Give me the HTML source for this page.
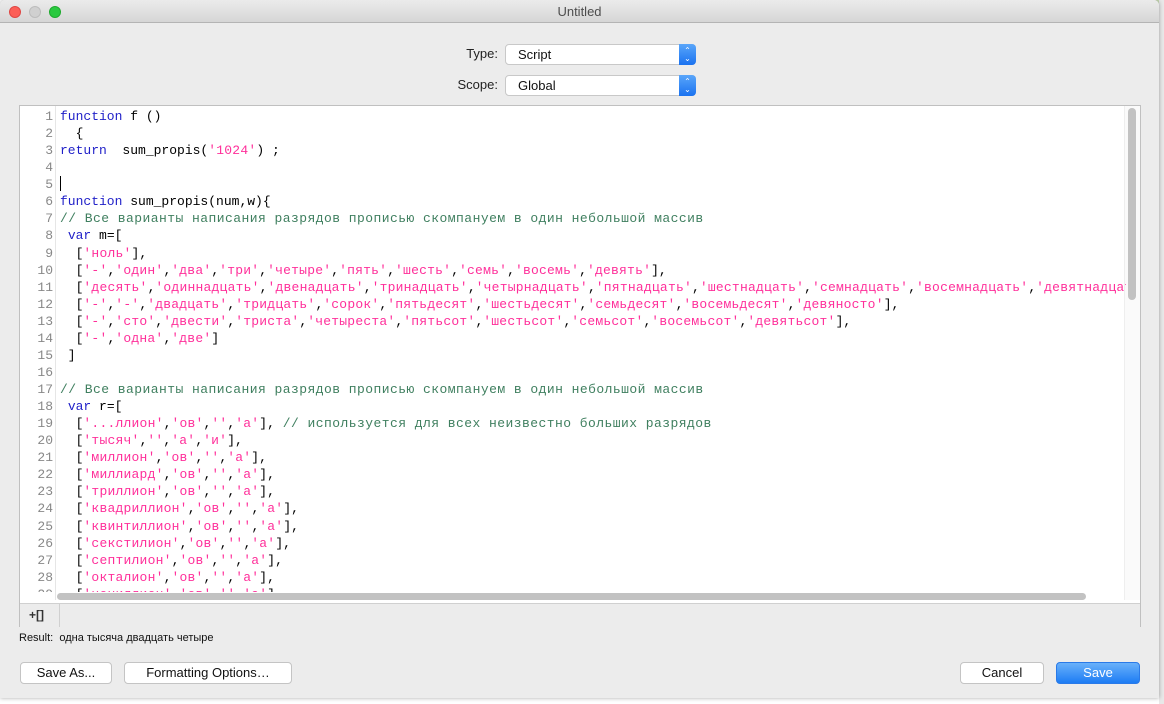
<!DOCTYPE html>
<html><head><meta charset="utf-8"><style>
*{margin:0;padding:0;box-sizing:border-box}
body{width:1164px;height:704px;overflow:hidden;background:#fff;font-family:"Liberation Sans","DejaVu Sans",sans-serif;position:relative}
.bgr{position:absolute;left:1159px;top:0;width:5px;height:704px;background:#e8e8e8}
.bgt{position:absolute;left:900px;top:0;width:264px;height:5px;background:#c9dbb4}
.win{position:absolute;left:0;top:0;width:1159px;height:698px;background:#ececec;border-radius:5px 5px 0 0;box-shadow:0 0 4px rgba(0,0,0,.35);overflow:hidden}
.title{height:23px;background:linear-gradient(#ebebeb,#d6d6d6);border-bottom:1px solid #b4b4b4;text-align:center;font-size:13px;line-height:23px;color:#4d4d4d}
.dot{position:absolute;top:6px;width:12px;height:12px;border-radius:50%}
.lbl{position:absolute;font-size:13px;color:#222;text-align:right;width:60px}
.sel{position:absolute;left:505px;width:191px;height:21px;background:#fff;border:1px solid #c8c8c8;border-radius:4px;font-size:13px;line-height:19px;padding-left:12px;color:#111}
.sel i{position:absolute;right:-1px;top:-1px;width:17px;height:21px;background:linear-gradient(#5aa6fa,#1a72f0);border-radius:0 4px 4px 0;color:#fff;font-style:normal;font-size:8px;line-height:8px;text-align:center;padding-top:3px}
.ed{position:absolute;left:19px;top:105px;width:1122px;height:522px;background:#fff;border:1px solid #c0c0c0}
.gut{position:absolute;left:0;top:0;width:36px;height:494px;border-right:1px solid #e6e6e6}
.code{position:absolute;left:0;top:2px;width:1106px;height:484px;overflow:hidden;font-family:"Liberation Mono",monospace;font-size:13px;line-height:17.07px;white-space:pre}
.ln{position:absolute;left:0;width:33px;text-align:right;color:#888}
.tx{position:absolute;left:40px;color:#000}
.k{color:#1f1fc8}.s{color:#ff2f9a;letter-spacing:0.22px}.c{color:#3f7f5f;letter-spacing:0.45px}
.vs{position:absolute;left:1108px;top:2px;width:8px;height:192px;background:#c2c2c2;border-radius:4px}
.vtrack{position:absolute;left:1104px;top:0;width:16px;height:494px;border-left:1px solid #eee;background:#fafafa}
.hs{position:absolute;left:37px;top:487px;width:1029px;height:7px;background:#c2c2c2;border-radius:4px}
.bar{position:absolute;left:0;top:497px;width:1120px;height:24px;background:#ececec;border-top:1px solid #d0d0d0}
.btn{position:absolute;height:22px;background:#fff;border:1px solid #c4c4c4;border-radius:4px;font-size:13px;line-height:20px;text-align:center;color:#111}
</style></head><body>
<div class="bgt"></div><div class="bgr"></div>
<div class="win">
<div class="title">Untitled</div>
<div class="dot" style="left:9px;background:#fc5f57;border:1px solid #df4744"></div>
<div class="dot" style="left:29px;background:#d0d0d0;border:1px solid #bcbcbc"></div>
<div class="dot" style="left:49px;background:#2ac940;border:1px solid #1eaa2e"></div>
<div class="lbl" style="left:438px;top:46px">Type:</div>
<div class="sel" style="top:44px">Script<i>⌃<br>⌄</i></div>
<div class="lbl" style="left:438px;top:77px">Scope:</div>
<div class="sel" style="top:75px">Global<i>⌃<br>⌄</i></div>
<div class="ed">
<div class="gut"></div>
<div class="vtrack"></div>
<div class="code"><div class="ln" style="top:0">1
2
3
4
5
6
7
8
9
10
11
12
13
14
15
16
17
18
19
20
21
22
23
24
25
26
27
28
29</div><div class="tx" style="top:0"><span class="k">function</span> f ()
  {
<span class="k">return</span>  sum_propis(<span class="s">'1024'</span>) ;


<span class="k">function</span> sum_propis(num,w){
<span class="c">// Все варианты написания разрядов прописью скомпануем в один небольшой массив</span>
 <span class="k">var</span> m=[
  [<span class="s">'ноль'</span>],
  [<span class="s">'-'</span>,<span class="s">'один'</span>,<span class="s">'два'</span>,<span class="s">'три'</span>,<span class="s">'четыре'</span>,<span class="s">'пять'</span>,<span class="s">'шесть'</span>,<span class="s">'семь'</span>,<span class="s">'восемь'</span>,<span class="s">'девять'</span>],
  [<span class="s">'десять'</span>,<span class="s">'одиннадцать'</span>,<span class="s">'двенадцать'</span>,<span class="s">'тринадцать'</span>,<span class="s">'четырнадцать'</span>,<span class="s">'пятнадцать'</span>,<span class="s">'шестнадцать'</span>,<span class="s">'семнадцать'</span>,<span class="s">'восемнадцать'</span>,<span class="s">'девятнадцать'</span>],
  [<span class="s">'-'</span>,<span class="s">'-'</span>,<span class="s">'двадцать'</span>,<span class="s">'тридцать'</span>,<span class="s">'сорок'</span>,<span class="s">'пятьдесят'</span>,<span class="s">'шестьдесят'</span>,<span class="s">'семьдесят'</span>,<span class="s">'восемьдесят'</span>,<span class="s">'девяносто'</span>],
  [<span class="s">'-'</span>,<span class="s">'сто'</span>,<span class="s">'двести'</span>,<span class="s">'триста'</span>,<span class="s">'четыреста'</span>,<span class="s">'пятьсот'</span>,<span class="s">'шестьсот'</span>,<span class="s">'семьсот'</span>,<span class="s">'восемьсот'</span>,<span class="s">'девятьсот'</span>],
  [<span class="s">'-'</span>,<span class="s">'одна'</span>,<span class="s">'две'</span>]
 ]

<span class="c">// Все варианты написания разрядов прописью скомпануем в один небольшой массив</span>
 <span class="k">var</span> r=[
  [<span class="s">'...ллион'</span>,<span class="s">'ов'</span>,<span class="s">''</span>,<span class="s">'а'</span>], <span class="c">// используется для всех неизвестно больших разрядов</span>
  [<span class="s">'тысяч'</span>,<span class="s">''</span>,<span class="s">'а'</span>,<span class="s">'и'</span>],
  [<span class="s">'миллион'</span>,<span class="s">'ов'</span>,<span class="s">''</span>,<span class="s">'а'</span>],
  [<span class="s">'миллиард'</span>,<span class="s">'ов'</span>,<span class="s">''</span>,<span class="s">'а'</span>],
  [<span class="s">'триллион'</span>,<span class="s">'ов'</span>,<span class="s">''</span>,<span class="s">'а'</span>],
  [<span class="s">'квадриллион'</span>,<span class="s">'ов'</span>,<span class="s">''</span>,<span class="s">'а'</span>],
  [<span class="s">'квинтиллион'</span>,<span class="s">'ов'</span>,<span class="s">''</span>,<span class="s">'а'</span>],
  [<span class="s">'секстилион'</span>,<span class="s">'ов'</span>,<span class="s">''</span>,<span class="s">'а'</span>],
  [<span class="s">'септилион'</span>,<span class="s">'ов'</span>,<span class="s">''</span>,<span class="s">'а'</span>],
  [<span class="s">'окталион'</span>,<span class="s">'ов'</span>,<span class="s">''</span>,<span class="s">'а'</span>],
  [<span class="s">'нониллион'</span>,<span class="s">'ов'</span>,<span class="s">''</span>,<span class="s">'а'</span>],</div></div>
<div style="position:absolute;left:40px;top:70px;width:1px;height:15px;background:#000"></div>
<div class="vs"></div>
<div class="hs"></div>
<div class="bar"><div style="position:absolute;left:0;top:0;width:40px;height:23px;border-right:1px solid #d0d0d0;font-size:12px;font-weight:bold;line-height:22px;padding-left:9px;color:#333">+[]</div></div>
</div>
<div style="position:absolute;left:19px;top:632px;font-size:11px;color:#111">Result:&nbsp; одна тысяча двадцать четыре</div>
<div class="btn" style="left:20px;top:662px;width:92px">Save As...</div>
<div class="btn" style="left:124px;top:662px;width:168px">Formatting Options…</div>
<div class="btn" style="left:960px;top:662px;width:84px">Cancel</div>
<div class="btn" style="left:1056px;top:662px;width:84px;background:linear-gradient(#69b1fa,#1d7cf4);border-color:#2a7ae8;color:#fff">Save</div>
</div>
</body></html>
